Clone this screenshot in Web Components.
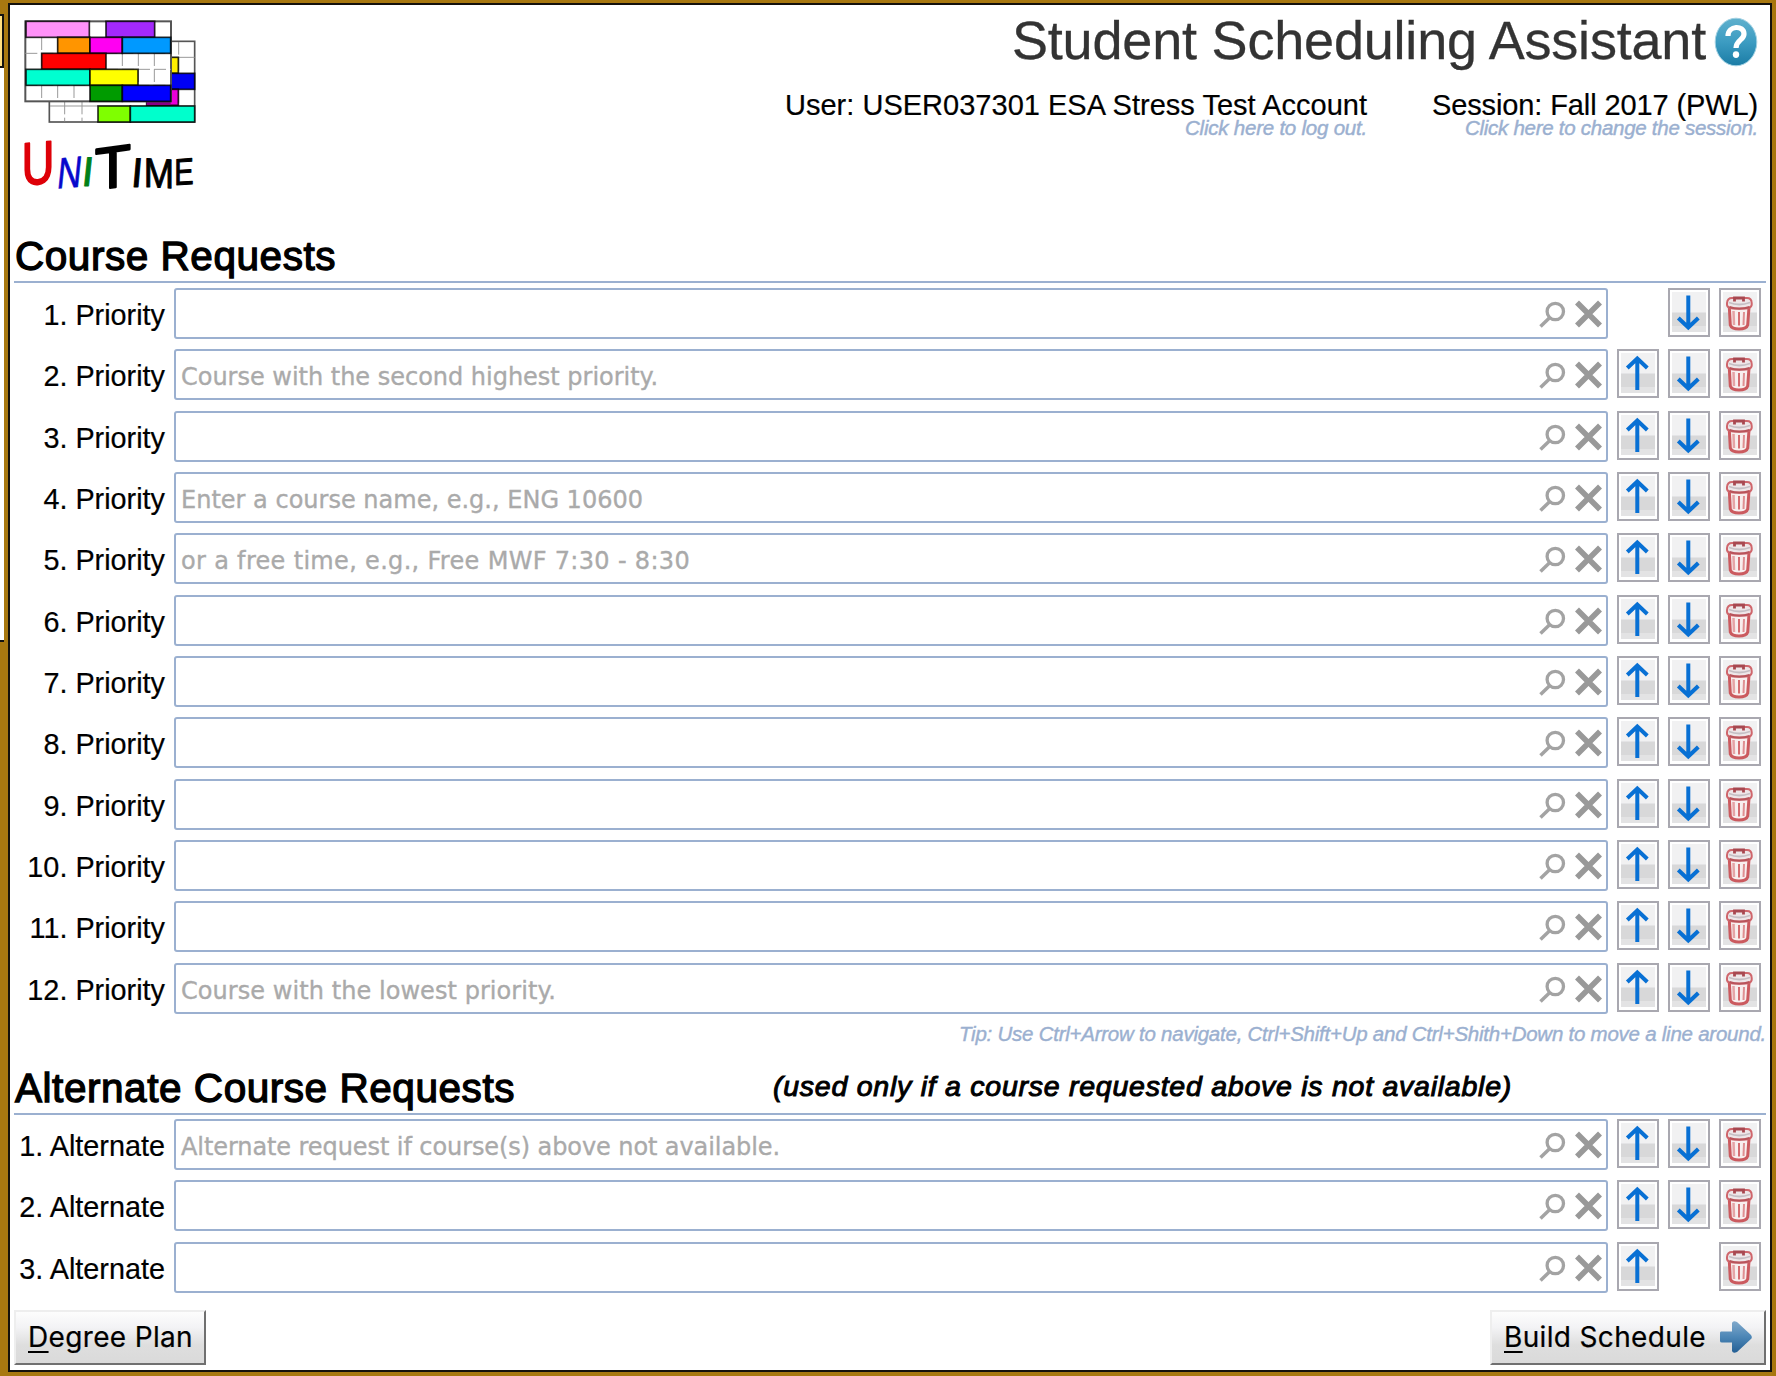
<!DOCTYPE html>
<html lang="en"><head><meta charset="utf-8"><title>Student Scheduling Assistant</title>
<style>html,body{margin:0;height:1376px;overflow:hidden;background:#a87810}body{font-family:"Liberation Sans",Arial,sans-serif;color:#000}</style></head>
<body><scheduling-page></scheduling-page>
<script>
const define=(name,html,init)=>customElements.define(name,class extends HTMLElement{
  connectedCallback(){
    if(this.shadowRoot)return;
    this.attachShadow({mode:'open'}).innerHTML=typeof html==='function'?html(this):html;
    if(init)init(this);
  }
});

// Text tracked so that it fills the width in its "w" attribute.
define('fit-text','<style>:host{display:inline-block;white-space:pre}</style><slot></slot>',el=>{
  const n=el.textContent.length,w=+el.getAttribute('w');
  el.style.letterSpacing=((w-el.getBoundingClientRect().width)/n).toFixed(4)+'px';
});

define('unitime-logo',()=>{
  const r=(x,y,w,h,c)=>`<rect x="${x}" y="${y}" width="${w}" height="${h}" fill="${c}" stroke="#000" stroke-opacity=".82" stroke-width="5"/>`;
  const v=(x,y1,y2)=>`<path d="M${x} ${y1}V${y2}" stroke="#999" stroke-width="3" stroke-dasharray="38 10"/>`;
  const t=(x,y,s,c,ch,sx,tf,sw)=>`<text transform="translate(${x} ${y}) ${tf} scale(${sx} 1)" font-size="${s}" fill="${c}" stroke="${c}" stroke-width="${sw}">${ch}</text>`;
  return `<style>:host{display:block;width:200px;height:200px}svg{display:block;overflow:visible}text{font-family:"Liberation Sans",sans-serif;stroke-linejoin:round}</style>
  <svg width="200" height="200" viewBox="30 15 600 600" fill="none">
  <rect x="148" y="124" width="436" height="242" fill="#fff" stroke="#555" stroke-width="5"/>
  ${v(536,126,316)}${v(194,305,364)}${v(246,305,364)}<path d="M514 172H584M150 318H584" stroke="#999" stroke-width="3"/>
  ${r(500,172,35,48,'#ffee00')}${r(500,220,84,48,'#0000f5')}${r(440,268,95,48,'#e800d8')}<path d="M440 308H512" stroke="#808" stroke-width="14"/>
  ${r(294,318,97,48,'#7fff00')}${r(391,318,193,48,'#00ffcc')}
  <rect x="76" y="64" width="437" height="240" fill="#fff" stroke="#555" stroke-width="6"/>
  ${v(125,112,304)}${v(173,112,304)}${v(222,256,304)}${v(367,160,256)}${v(415,160,256)}${v(463,160,256)}
  <path d="M76 160H513M318 208H513M76 256H513" stroke="#999" stroke-width="3" stroke-dasharray="36 12"/>
  ${r(78,64,190,48,'#ff91f8')}${r(318,64,146,48,'#a329fb')}${r(173,112,97,48,'#ff9500')}${r(270,112,97,48,'#ff00f2')}${r(367,112,145,48,'#0099ff')}
  ${r(125,160,193,48,'#ff0000')}${r(78,208,192,48,'#00ffd0')}${r(270,208,144,48,'#ffff00')}${r(270,256,97,48,'#009b00')}${r(367,256,145,48,'#0000ff')}
  ${t(65,556,180,'#de0008','U',.75,'skewY(-5)',6)}${t(168,566,132,'#0708cc','N',.76,'skewX(-6) skewY(-5)',2)}${t(242,558,124,'#008018','I',1,'skewX(-6)',3)}
  ${t(285,570,176,'#000','T',1,'skewY(-8)',7)}${t(391,560,124,'#000','I',1,'skewX(-5)',3)}${t(431,560,124,'#000','M',.88,'skewY(3)',3)}${t(523,556,112,'#000','E',.78,'skewY(-4)',3)}
  </svg>`;
});

define('help-badge',`<style>:host{display:block;width:44px;height:50px}svg{display:block}</style>
<svg width="44" height="50"><defs><linearGradient id="g" x2="0" y2="1"><stop offset="0" stop-color="#5fb0cd"/><stop offset=".5" stop-color="#3c9cc2"/><stop offset="1" stop-color="#1b7ca5"/></linearGradient></defs>
<ellipse cx="22" cy="25" rx="20.8" ry="23.8" fill="url(#g)" stroke="#9fd0e2" stroke-width="1"/>
<path d="M14 19C14 8 30 8 30 17C30 23 22 23 22 31" fill="none" stroke="#fff" stroke-width="5.2"/><ellipse cx="22" cy="37.6" rx="3.2" ry="3.4" fill="#fff"/></svg>`);

define('page-header',`<style>
:host{display:flex;justify-content:space-between;height:228px;padding:0 8px 0 0;box-sizing:border-box}
unitime-logo{margin-left:-4px}
.r{display:flex;flex-direction:column;align-items:flex-end}
.t{display:flex;gap:8px;padding-top:5px;height:60px;line-height:60px;font-size:54px;color:#333;-webkit-text-stroke:.3px #333}
help-badge{margin-top:7px}
.i{display:flex;gap:65px;margin-top:23px}
.c{display:flex;flex-direction:column;align-items:flex-end;font-size:29px;line-height:25px;-webkit-text-stroke:.2px #000}
.s{font-size:20.5px;line-height:20px;font-style:italic;color:#9bb0d0;-webkit-text-stroke:.45px #9bb0d0}
</style><unitime-logo></unitime-logo>
<div class="r"><div class="t"><fit-text w="694">Student Scheduling Assistant</fit-text><help-badge></help-badge></div>
<div class="i"><div class="c"><fit-text w="582">User: USER037301 ESA Stress Test Account</fit-text><fit-text class="s" w="182">Click here to log out.</fit-text></div>
<div class="c"><fit-text w="326">Session: Fall 2017 (PWL)</fit-text><fit-text class="s" w="293">Click here to change the session.</fit-text></div></div></div>`);

define('section-title',`<style>:host{display:flex;height:48px;line-height:46px;padding-left:1px;font-size:40.5px;border-bottom:2px solid #9bb0d0;-webkit-text-stroke:1.3px #000}
::slotted([slot=note]){font-size:28.5px;line-height:43px;font-style:italic;-webkit-text-stroke:1px #000}</style><slot></slot><slot name="note"></slot>`);

define('icon-button',el=>{
  const k=el.getAttribute('kind');
  const art={
    up:'<path d="M20.3 41V9.5M10.3 19L20.3 9.5L30.3 19" fill="none" stroke="#0870d4" stroke-width="4"/>',
    down:'<path d="M20.3 7.5V39M10.3 30L20.3 39.5L30.3 30" fill="none" stroke="#0870d4" stroke-width="4"/>',
    trash:`<path d="M10.300 19L11.300 37Q12.500 41 20 41Q27.500 41 28.700 37L30 19Z" fill="#f8eeee" stroke="#cb5a5f" stroke-width="3"/>
      <path d="M14.500 23L15 37" stroke="#e5a3a5" stroke-width="2.500"/><path d="M20 24V37.500" stroke="#d56c70" stroke-width="2"/><path d="M25 24L24.500 37" stroke="#df8f92" stroke-width="2"/>
      <path d="M8 15Q8.500 10 13 10H28Q32.500 10 32.700 15V17Q32 20 27 20.500H14Q8.500 20 8 17Z" fill="#eee6e8" stroke="#cf666c" stroke-width="2"/>
      <path d="M10 14.500Q20 18.500 31 14.500" fill="none" stroke="#c5bfc4" stroke-width="1.800"/><path d="M15.500 13.500V10H24.500V13.500" fill="none" stroke="#a84850" stroke-width="2.800"/>
      <path d="M10.500 19Q20 22.500 30.500 19" fill="none" stroke="#b9545b" stroke-width="2"/>`};
  if(!art[k])return '<style>:host{display:block;width:42px}</style>';
  return `<style>:host{display:block;width:42px;height:49px}svg{display:block}</style><svg width="42" height="49">
  <rect x="1" y="1" width="40" height="47" fill="#fff" stroke="#a9a8b0" stroke-width="2"/>
  <rect x="4" y="4" width="34" height="21" fill="#f1f1f2"/><rect x="4" y="24.5" width="34" height="19.5" fill="#d8d8d9"/><rect x="4" y="38" width="34" height="6" fill="#e3e3e4"/>${art[k]}</svg>`;
});

define('course-field',el=>{
  const p=el.getAttribute('hint');
  return `<style>:host{display:flex;justify-content:space-between;box-sizing:border-box;width:1434px;height:51px;border:2px solid #9bb0d0;border-radius:3px;background:#fff;padding-left:5px}
  .h{font:24px/53px "DejaVu Sans",Verdana,sans-serif;color:#aaa;-webkit-text-stroke:.35px #aaa}svg{display:block}</style>
  <div class="h">${p?`<fit-text w="${el.getAttribute('w')}">${p}</fit-text>`:''}</div>
  <svg width="70" height="47" fill="none"><circle cx="19.3" cy="21.5" r="8.2" stroke="#a3a3a3" stroke-width="3.3"/><path d="M13.3 28L4.5 36.500" stroke="#a3a3a3" stroke-width="3.5"/><path d="M41 12.500L64 35.500M64 12.500L41 35.500" stroke="#999" stroke-width="5.6"/></svg>`;
});

define('request-row',el=>{
  const a=n=>el.getAttribute(n)||'';
  return `<style>:host{display:flex;height:61.33px;align-items:flex-start}
  .l{width:151px;margin-right:9px;display:flex;justify-content:flex-end;font-size:28.8px;line-height:54px;white-space:nowrap;-webkit-text-stroke:.2px #000}
  .b{display:flex;gap:9px;margin-left:9px}</style>
  <div class="l">${a('label')}</div><course-field hint="${a('hint')}" w="${a('w')}"></course-field>
  <div class="b"><icon-button kind="${a('up')==='no'?'':'up'}"></icon-button><icon-button kind="${a('down')==='no'?'':'down'}"></icon-button><icon-button kind="trash"></icon-button></div>`;
});

define('push-button',`<style>:host{display:flex;align-items:center;gap:13px;box-sizing:border-box;height:55px;border:2px solid;border-color:#eee #707070 #707070 #eee;background:linear-gradient(#fdfdfd,#f3f3f5 30%,#dedede 65%,#dadada);font:28px/53px Inter,sans-serif;padding:0 11px 0 12px;-webkit-text-stroke:.2px #000}
::slotted(svg){display:block}</style><slot></slot>`);

define('scheduling-page',()=>{
  const hints={2:['Course with the second highest priority.',477],4:['Enter a course name, e.g., ENG 10600',462],5:['or a free time, e.g., Free MWF 7:30 - 8:30',509],12:['Course with the lowest priority.',375]};
  const row=(label,h,extra='')=>`<request-row label="${label}" ${h?`hint="${h[0]}" w="${h[1]}"`:''} ${extra}></request-row>`;
  const pri=Array.from({length:12},(_,i)=>row(`${i+1}. Priority`,hints[i+1],i?'':'up="no"')).join('');
  return `<style>
  :host{display:flex;gap:4px;width:1776px;height:1376px;background:linear-gradient(90deg,#a87810,#a87810 1771px,#a6740b)}
  .side{width:4px;height:642px;box-sizing:border-box;background:#fff;border-bottom:2px solid #111;display:flex;flex-direction:column}
  .side i{display:block;height:14px;background:#a87810}.side b{display:block;height:50px;background:#ffdf80;border:solid #111;border-width:2px 2px 2px 0}
  .win{box-sizing:border-box;width:1764px;height:1369px;margin-top:3px;border:2px solid #14110c;background:#fff;padding:0 4px}
  .p{padding-top:5px}.a{padding-top:4px}
  .tip{display:flex;justify-content:flex-end;margin-top:-2px;margin-bottom:19px;font-size:20.5px;line-height:24px;font-style:italic;color:#9bb0d0;-webkit-text-stroke:.4px #9bb0d0}
  .note{margin-left:258px}
  .f{display:flex;justify-content:space-between;margin-top:7px}u{text-decoration-thickness:2px;text-underline-offset:4px;text-decoration-skip-ink:none}
  </style>
  <div class="side"><i></i><b></b></div>
  <div class="win"><page-header></page-header>
  <section-title><fit-text w="321">Course Requests</fit-text></section-title>
  <div class="p">${pri}</div>
  <div class="tip"><fit-text w="807">Tip: Use Ctrl+Arrow to navigate, Ctrl+Shift+Up and Ctrl+Shith+Down to move a line around.</fit-text></div>
  <section-title><fit-text w="500">Alternate Course Requests</fit-text><fit-text slot="note" class="note" w="739">(used only if a course requested above is not available)</fit-text></section-title>
  <div class="a">${row('1. Alternate',['Alternate request if course(s) above not available.',599])}${row('2. Alternate')}${row('3. Alternate',null,'down="no"')}</div>
  <div class="f"><push-button><fit-text w="165"><u>D</u>egree Plan</fit-text></push-button>
  <push-button><fit-text w="202"><u>B</u>uild Schedule</fit-text><svg width="34" height="34"><defs><linearGradient id="ar" x2="0" y2="1"><stop offset="0" stop-color="#80a9cb"/><stop offset=".5" stop-color="#4c86b6"/><stop offset="1" stop-color="#245f94"/></linearGradient></defs><path d="M2 11.5Q1 11.5 1 13V21Q1 22.5 3 22.5H13V31Q14 34 18 32L32.500 18.500Q33.500 17 32 15L18 2Q14 0 13 3V11.500Z" fill="url(#ar)"/></svg></push-button></div>
  </div>`;
});
</script></body></html>
